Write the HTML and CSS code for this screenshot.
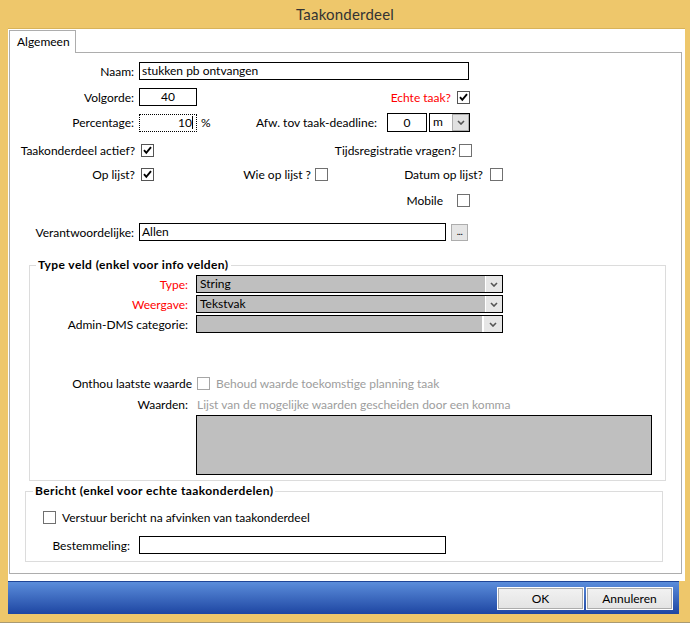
FILE: index.html
```html
<!DOCTYPE html>
<html>
<head>
<meta charset="utf-8">
<link rel="stylesheet" href="styles.css">
</head>
<body>
<div class="window">
  <div class="titlebar">Taakonderdeel</div>
  <div class="client">
    <div class="tabstrip"><div class="tab">Algemeen</div></div>
    <div class="panel">
      <div class="row r1">
        <div class="lbl w124">Naam:</div>
        <div class="input name-in">stukken pb ontvangen</div>
      </div>
      <div class="row r2">
        <div class="lbl w124">Volgorde:</div>
        <div class="input small-in center">40</div>
        <div class="lbl red w254">Echte taak?</div>
        <span class="cb checked ml6"><svg viewBox="0 0 11 11"><path d="M2 5.2 L4.3 7.8 L9 2.2"/></svg></span>
      </div>
      <div class="row r3">
        <div class="lbl w124">Percentage:</div>
        <div class="input small-in dotted right">10<span class="caret"></span></div>
        <div class="pct">%</div>
        <div class="lbl w160">Afw. tov taak-deadline:</div>
        <div class="input afw-in center">0</div>
        <div class="select m-sel"><span class="sel-text">m</span><span class="arrow"><svg viewBox="0 0 8 5"><path d="M1 1 L4 4 L7 1"/></svg></span></div>
      </div>
      <div class="row r4">
        <div class="lbl w125">Taakonderdeel actief?</div>
        <span class="cb checked ml6"><svg viewBox="0 0 11 11"><path d="M2 5.2 L4.3 7.8 L9 2.2"/></svg></span>
        <div class="lbl w302">Tijdsregistratie vragen?</div>
        <span class="cb ml3"></span>
      </div>
      <div class="row r5">
        <div class="lbl w125">Op lijst?</div>
        <span class="cb checked ml6"><svg viewBox="0 0 11 11"><path d="M2 5.2 L4.3 7.8 L9 2.2"/></svg></span>
        <div class="lbl w157">Wie op lijst ?</div>
        <span class="cb ml4"></span>
        <div class="lbl w155">Datum op lijst?</div>
        <span class="cb ml7"></span>
      </div>
      <div class="row r6">
        <div class="lbl w433">Mobile</div>
        <span class="cb ml14"></span>
      </div>
      <div class="row r7">
        <div class="lbl w124">Verantwoordelijke:</div>
        <div class="input verant-in">Allen</div>
        <div class="dots-btn">...</div>
      </div>

      <fieldset class="group g1">
        <legend>Type veld (enkel voor info velden)</legend>
        <div class="row gr-sel first">
          <div class="lbl red w158">Type:</div>
          <div class="select grey-sel"><span class="sel-text">String</span><span class="arrow"><svg viewBox="0 0 8 5"><path d="M1 1 L4 4 L7 1"/></svg></span></div>
        </div>
        <div class="row gr-sel">
          <div class="lbl red w158">Weergave:</div>
          <div class="select grey-sel"><span class="sel-text">Tekstvak</span><span class="arrow"><svg viewBox="0 0 8 5"><path d="M1 1 L4 4 L7 1"/></svg></span></div>
        </div>
        <div class="row gr-sel">
          <div class="lbl w158">Admin-DMS categorie:</div>
          <div class="select grey-sel"><span class="sel-text"></span><span class="arrow wide"><svg viewBox="0 0 8 5"><path d="M1 1 L4 4 L7 1"/></svg></span></div>
        </div>
        <div class="row onthou">
          <div class="lbl w162">Onthou laatste waarde</div>
          <span class="cb ml5 disabled"></span>
          <span class="muted ml6">Behoud waarde toekomstige planning taak</span>
        </div>
        <div class="row waarden">
          <div class="lbl w158">Waarden:</div>
          <span class="muted ml9">Lijst van de mogelijke waarden gescheiden door een komma</span>
        </div>
        <div class="textarea"></div>
      </fieldset>

      <fieldset class="group g2">
        <legend>Bericht (enkel voor echte taakonderdelen)</legend>
        <div class="row verstuur">
          <span class="cb ml17"></span>
          <span class="text ml6">Verstuur bericht na afvinken van taakonderdeel</span>
        </div>
        <div class="row bestem">
          <div class="lbl w104">Bestemmeling:</div>
          <div class="input bestem-in"></div>
        </div>
      </fieldset>
    </div>
  </div>
  <div class="bottombar">
    <div class="btn">OK</div>
    <div class="btn">Annuleren</div>
  </div>
</div>
</body>
</html>
```

FILE: styles.css
```css
* { box-sizing: border-box; }
html, body { margin: 0; padding: 0; }
body {
  width: 690px;
  height: 623px;
  overflow: hidden;
  font-family: "Lato", "Open Sans", sans-serif;
  font-size: 12px;
  color: #000;
  background: #eec76b;
}
.window {
  width: 690px;
  height: 623px;
  background: #eec76b;
  display: flex;
  flex-direction: column;
  border-bottom: 1px solid #a99a72;
}
.titlebar {
  height: 28px;
  flex: none;
  text-align: center;
  font-size: 15px;
  line-height: 28px;
  color: #333;
  letter-spacing: 0.2px;
}
.client {
  flex: none;
  margin-left: 8px;
  width: 677px;
  height: 553px;
  background: #fff;
  border-top: 1px solid #d8b35a;
  display: flex;
  flex-direction: column;
}
.tabstrip {
  height: 23px;
  flex: none;
  display: flex;
  align-items: flex-end;
  padding-left: 1px;
}
.tab {
  position: relative;
  z-index: 1;
  height: 23px;
  width: 67px;
  margin-bottom: -1px;
  border: 1px solid #adadad;
  border-bottom: none;
  background: #fff;
  padding-left: 7px;
  line-height: 22px;
}
.panel {
  flex: none;
  margin-left: 1px;
  width: 673px;
  height: 522px;
  border: 1px solid #adadad;
  display: flex;
  flex-direction: column;
}
.row {
  display: flex;
  align-items: center;
  flex: none;
}
.lbl {
  text-align: right;
  white-space: nowrap;
  flex: none;
}
.red { color: #ff0000; }
.w104 { width: 104px; }
.w124 { width: 124px; }
.w125 { width: 125px; }
.w155 { width: 155px; }
.w157 { width: 157px; }
.w158 { width: 158px; }
.w160 { width: 162px; }
.w162 { width: 162px; }
.w254 { width: 254px; }
.w302 { width: 302px; }
.w433 { width: 433px; }
.ml3 { margin-left: 3px; }
.ml4 { margin-left: 4px; }
.ml5 { margin-left: 5px; }
.ml6 { margin-left: 6px; }
.ml7 { margin-left: 7px; }
.ml9 { margin-left: 9px; }
.ml14 { margin-left: 14px; }
.ml17 { margin-left: 17px; }

.input {
  flex: none;
  height: 18px;
  border: 1px solid #000;
  background: #fff;
  line-height: 16px;
  padding: 0 2px;
  white-space: nowrap;
}
.center { text-align: center; }
.right { text-align: right; padding-right: 3px; display: flex; justify-content: flex-end; align-items: center; }
.dotted { border: 1px dotted #000; }
.caret { display: inline-block; width: 1px; height: 13px; background: #000; margin-left: 0; }
.r1 { margin-top: 9px; height: 18px; }
.r2 { margin-top: 8px; height: 18px; }
.r3 { margin-top: 7px; height: 19px; }
.r4 { margin-top: 12px; height: 13px; }
.r5 { margin-top: 11px; height: 13px; }
.r6 { margin-top: 13px; height: 13px; }
.r7 { margin-top: 16px; height: 18px; }
.name-in { margin-left: 5px; width: 330px; }
.small-in { margin-left: 5px; width: 58px; }
.pct { width: 18px; padding-left: 4px; flex: none; }
.afw-in { margin-left: 10px; width: 40px; height: 19px; line-height: 17px; }
.verant-in { margin-left: 5px; width: 307px; }
.dots-btn {
  margin-left: 5px;
  width: 17px;
  height: 17px;
  border: 1px solid #adadad;
  background: #e5e5e5;
  font-size: 10px;
  line-height: 13px;
  text-align: center;
  letter-spacing: -0.5px;
}

.select {
  flex: none;
  height: 19px;
  border: 1px solid #000;
  display: flex;
  align-items: stretch;
}
.sel-text { flex: 1; padding-left: 3px; line-height: 16px; white-space: nowrap; }
.arrow {
  flex: none;
  width: 17px;
  background: #e6e6e6;
  border-left: 1px solid #fff;
  display: flex;
  align-items: center;
  justify-content: center;
}
.arrow.wide { width: 20px; border-left: 2px solid #fff; }
.arrow svg { width: 8px; height: 5px; }
.arrow path { fill: none; stroke: #555; stroke-width: 1.6; }
.m-sel { margin-left: 2px; width: 41px; background: #fff; }
.m-sel .arrow { border: 1px solid #adadad; background: #e1e1e1; }
.grey-sel { margin-left: 8px; width: 307px; height: 18px; background: #bfbfbf; }

.cb {
  flex: none;
  width: 13px;
  height: 13px;
  border: 1px solid #707070;
  background: #fff;
  display: inline-flex;
  align-items: center;
  justify-content: center;
}
.cb svg { width: 11px; height: 11px; }
.cb path { fill: none; stroke: #000; stroke-width: 1.9; }
.cb.checked { border-color: #555; }
.cb.disabled { border-color: #a6a6a6; }
.muted { color: #9d9d9d; white-space: nowrap; }
.text { white-space: nowrap; }

.group {
  margin: 0;
  padding: 0;
  border: 1px solid #dcdcdc;
  min-width: 0;
  display: flex;
  flex-direction: column;
}
.group legend {
  font-weight: bold;
  line-height: 16px;
  padding: 0 2px;
  white-space: nowrap;
  letter-spacing: 0.4px;
}
.g1 { margin-left: 19px; margin-top: 16px; width: 637px; padding-bottom: 5px; }
.g1 legend { margin-left: 6px; }
.g2 { margin-left: 15px; margin-top: 2px; width: 638px; padding-bottom: 7px; }
.g2 legend { margin-left: 7px; }
.gr-sel { margin-top: 2px; height: 18px; }
.gr-sel.first { margin-top: 2px; }
.onthou { margin-top: 44px; height: 13px; }
.waarden { margin-top: 7px; height: 14px; }
.textarea {
  margin-top: 4px;
  margin-left: 166px;
  width: 456px;
  height: 60px;
  border: 1px solid #000;
  background: #bfbfbf;
  flex: none;
}
.verstuur { margin-top: 12px; height: 13px; }
.bestem { margin-top: 12px; height: 18px; }
.bestem-in { margin-left: 9px; width: 307px; }

.bottombar {
  flex: none;
  margin-left: 8px;
  width: 671px;
  height: 33px;
  border-top: 1px solid #1f4597;
  background: linear-gradient(#5b8ddb, #1e46a2);
  display: flex;
  justify-content: flex-end;
  align-items: center;
  gap: 2px;
  padding-right: 6px;
  padding-top: 1px;
}
.btn {
  width: 87px;
  height: 23px;
  border: 1px solid #fff;
  outline: 1px solid #acacac;
  outline-offset: -2px;
  background: linear-gradient(#f2f2f2, #e3e3e3);
  text-align: center;
  line-height: 21px;
}
```
